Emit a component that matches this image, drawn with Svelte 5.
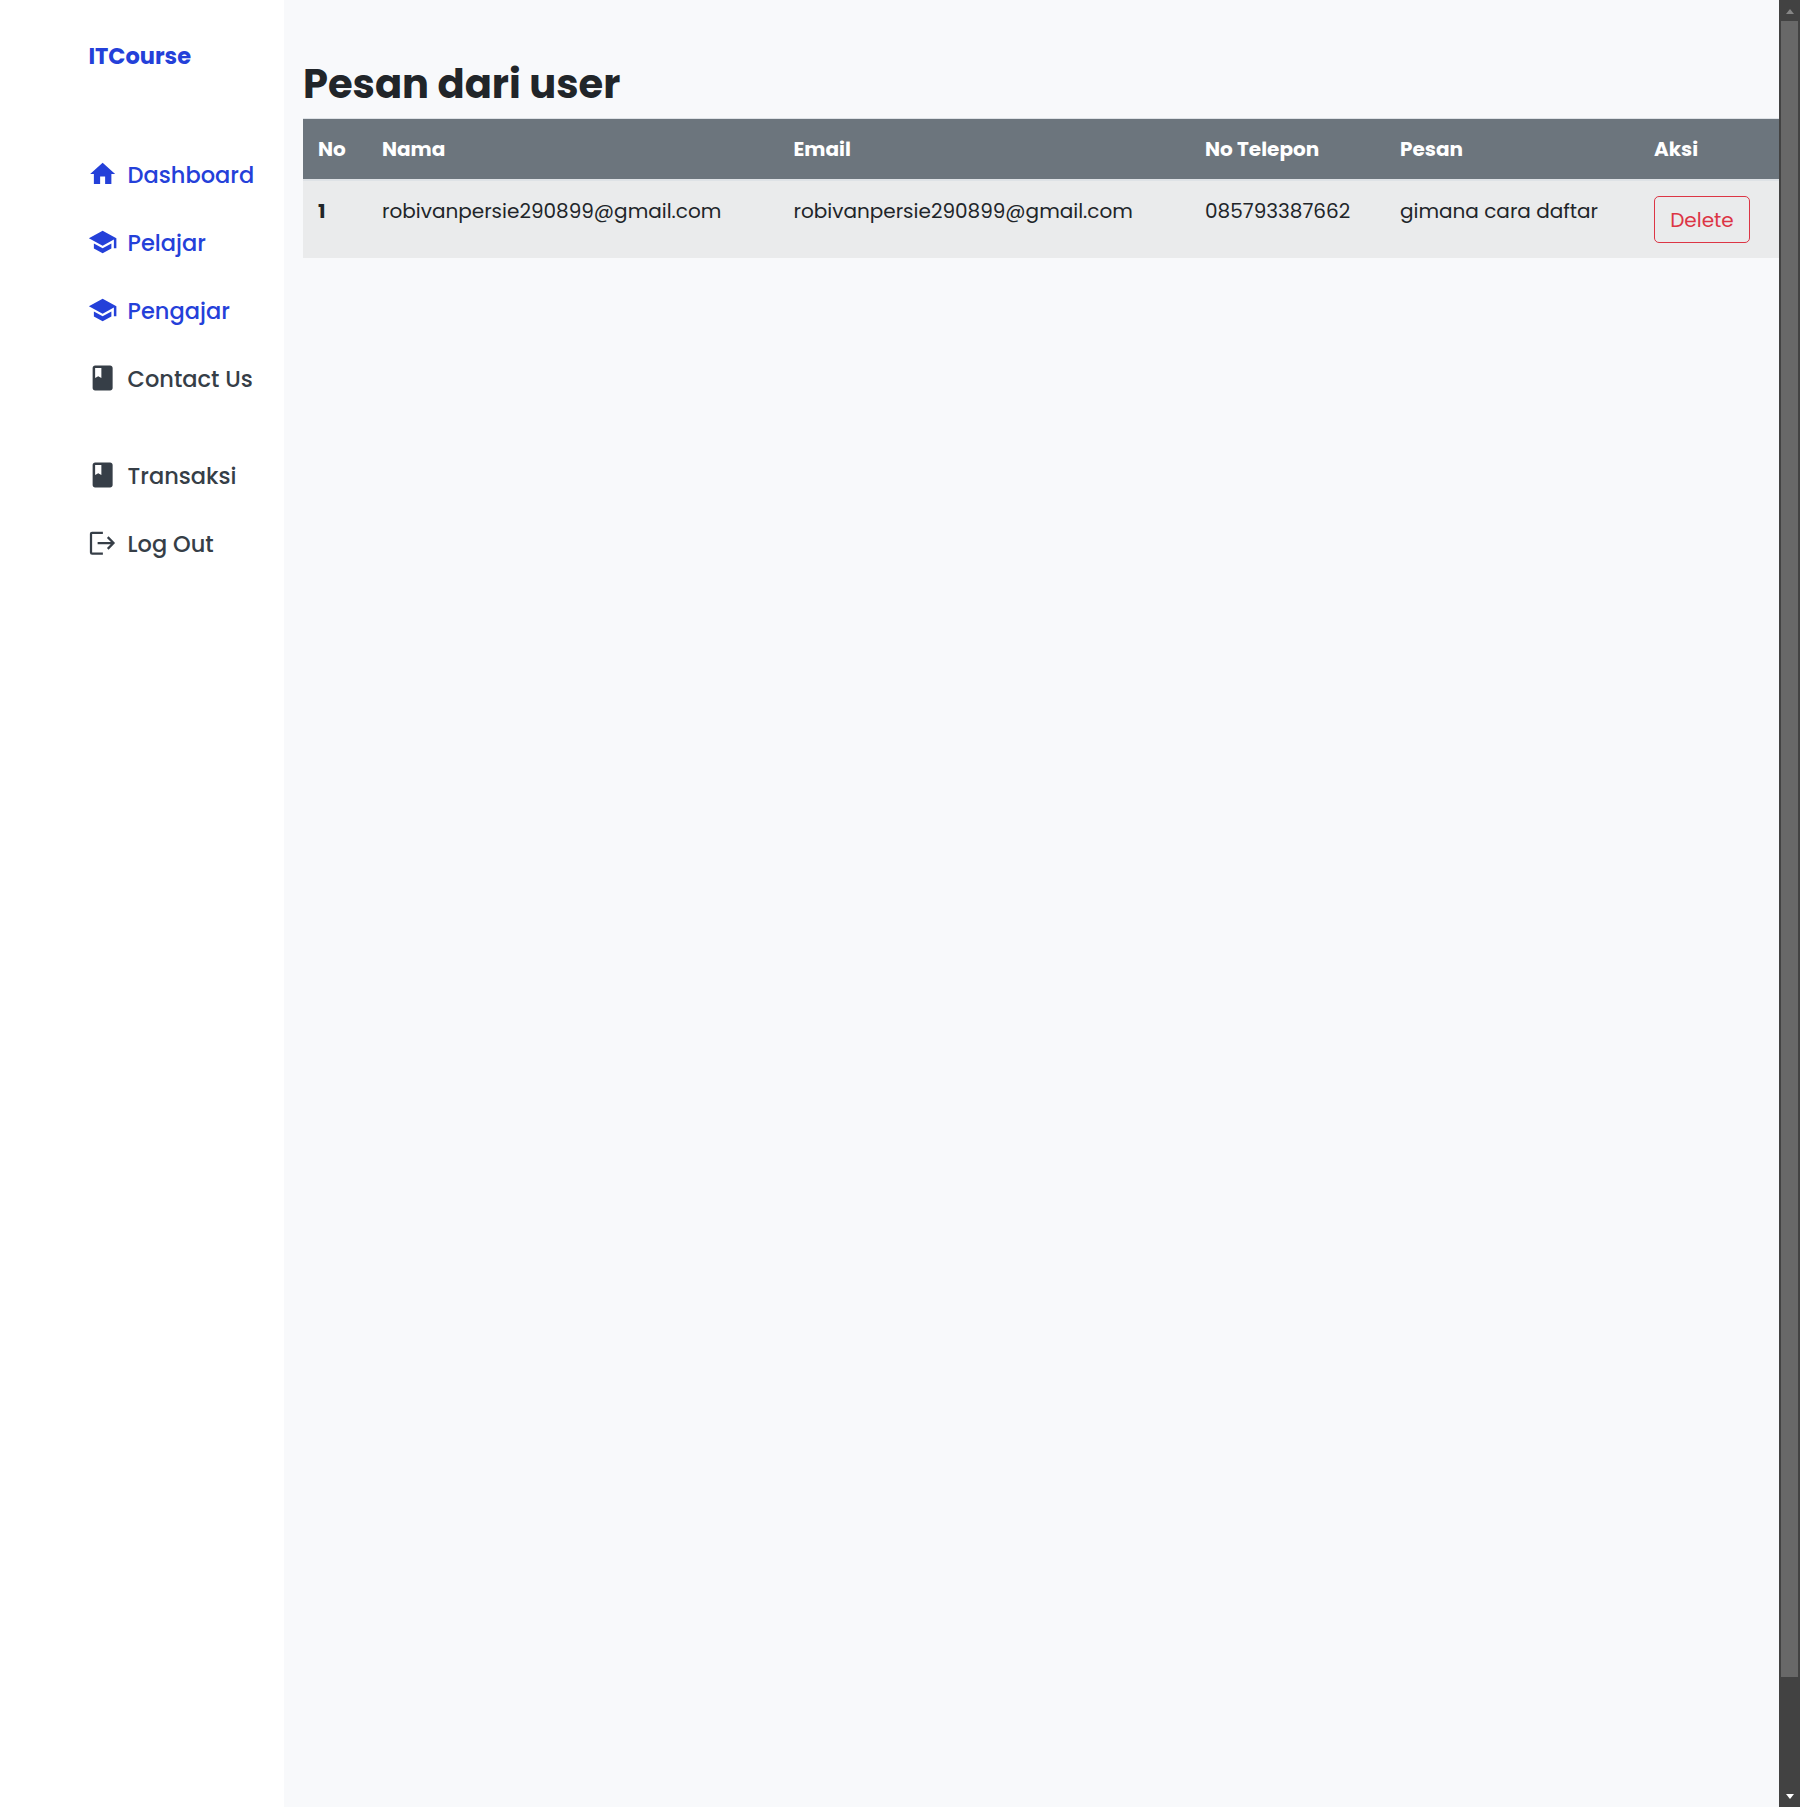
<script>
  const home = 'M10 20v-6h4v6h5v-8h3L12 3 2 12h3v8z';
  const school = 'M12 3 1 9l11 6 9-4.91V17h2V9M5 13.18v4L12 21l7-3.82v-4L12 17l-7-3.82z';
  const book = 'M18 2H6c-1.1 0-2 .9-2 2v16c0 1.1.9 2 2 2h12c1.1 0 2-.9 2-2V4c0-1.1-.9-2-2-2zM6 4h5v8l-2.5-1.5L6 12V4z';
  const menu = [
    { label: 'Dashboard', icon: home, active: true },
    { label: 'Pelajar', icon: school, active: true },
    { label: 'Pengajar', icon: school, active: true },
    { label: 'Contact Us', icon: book },
    { label: 'Transaksi', icon: book, gap: true },
    { label: 'Log Out' }
  ];
  const columns = ['No', 'Nama', 'Email', 'No Telepon', 'Pesan', 'Aksi'];
  const cells = ['robivanpersie290899@gmail.com', 'robivanpersie290899@gmail.com', '085793387662', 'gimana cara daftar'];
</script>

<div class="page">
  <aside>
    <div class="brand">ITCourse</div>
    <nav>
      {#each menu as m}
        <a class:active={m.active} class:gap={m.gap}>
          <svg viewBox="0.3 0 24 24">
            {#if m.icon}
              <path d={m.icon} />
            {:else}
              <path class="line" d="M12.2 3.8H3.6q-.9 0-.9.9v14.8q0 .9.9.9h8.6M8 12H20.4M16.1 7.3 20.7 12l-4.6 4.7" />
            {/if}
          </svg>
          <span>{m.label}</span>
        </a>
      {/each}
    </nav>
  </aside>
  <main>
    <h1>Pesan dari user</h1>
    <table>
      <colgroup><col class="c1" /><col class="c2" /><col class="c2" /><col class="c4" /><col class="c5" /><col /></colgroup>
      <thead>
        <tr>{#each columns as c}<th>{c}</th>{/each}</tr>
      </thead>
      <tbody>
        <tr>
          <th>1</th>
          {#each cells as c}<td>{c}</td>{/each}
          <td><button>Delete</button></td>
        </tr>
      </tbody>
    </table>
  </main>
  <div class="scrollbar">
    <i class="up"></i>
    <div class="thumb"></div>
    <i class="down"></i>
  </div>
</div>

<style>
  :global(body) { margin: 0; overflow: hidden; }
  .page {
    display: flex;
    width: 1800px;
    height: 1807px;
    overflow: hidden;
    background: #f8f9fb;
    color: #212529;
    font-family: Poppins, Inter, sans-serif;
  }
  aside {
    flex: 0 0 284px;
    box-sizing: border-box;
    padding: 36px 0 0 88px;
    background: #fff;
  }
  .brand {
    height: 105px;
    padding-left: 0.4px;
    font-size: 22.5px;
    font-weight: 700;
    line-height: 40px;
    color: #2440d9;
  }
  nav { display: flex; flex-direction: column; }
  a {
    display: flex;
    align-items: center;
    height: 68px;
    color: #363e47;
    font-size: 22.5px;
    font-weight: 500;
    white-space: nowrap;
  }
  .active { color: #2440d9; }
  .gap { margin-top: 29px; }
  svg { width: 30px; height: 30px; margin: -2px 9.6px 0 0; fill: currentColor; }
  .line { fill: none; stroke: currentColor; stroke-width: 1.8; }
  main { flex: 1; min-width: 0; padding: 58px 0 0 19px; overflow: hidden; }
  h1 {
    margin: 0;
    height: 60px;
    font-size: 40px;
    font-weight: 700;
    line-height: 52px;
  }
  table {
    width: 1490px;
    table-layout: fixed;
    border-collapse: separate;
    border-spacing: 0;
    font-size: 20px;
    font-weight: 400;
    line-height: 30px;
  }
  .c1 { width: 64px; }
  .c2 { width: 411.5px; }
  .c4 { width: 195px; }
  .c5 { width: 254px; }
  th, td { padding: 0 0 0 15px; text-align: left; vertical-align: top; white-space: nowrap; }
  th { font-weight: 700; }
  thead th {
    height: 60px;
    vertical-align: middle;
    background: #6c757d;
    color: #fff;
    border-top: 1px solid #dee2e6;
    border-bottom: 2px solid #dee2e6;
  }
  tbody th, tbody td { height: 62px; padding-top: 15px; background: #eaebec; }
  button {
    display: block;
    box-sizing: border-box;
    width: 96px;
    height: 47px;
    padding: 0;
    border: 1px solid #dc3545;
    border-radius: 5px;
    background: transparent;
    color: #dc3545;
    font: inherit;
  }
  .scrollbar {
    flex: 0 0 21px;
    box-sizing: border-box;
    display: flex;
    flex-direction: column;
    align-items: center;
    padding: 9px 2px 8px 2px;
    background: #424242;
  }
  .thumb { width: 17px; height: 1656px; margin: 7px 0 117px; background: #686868; }
  i { border: 4.5px solid transparent; width: 0; height: 0; }
  .up { border-top: 0; border-bottom: 5px solid #868686; }
  .down { border-bottom: 0; border-top: 5px solid #fff; }
</style>
